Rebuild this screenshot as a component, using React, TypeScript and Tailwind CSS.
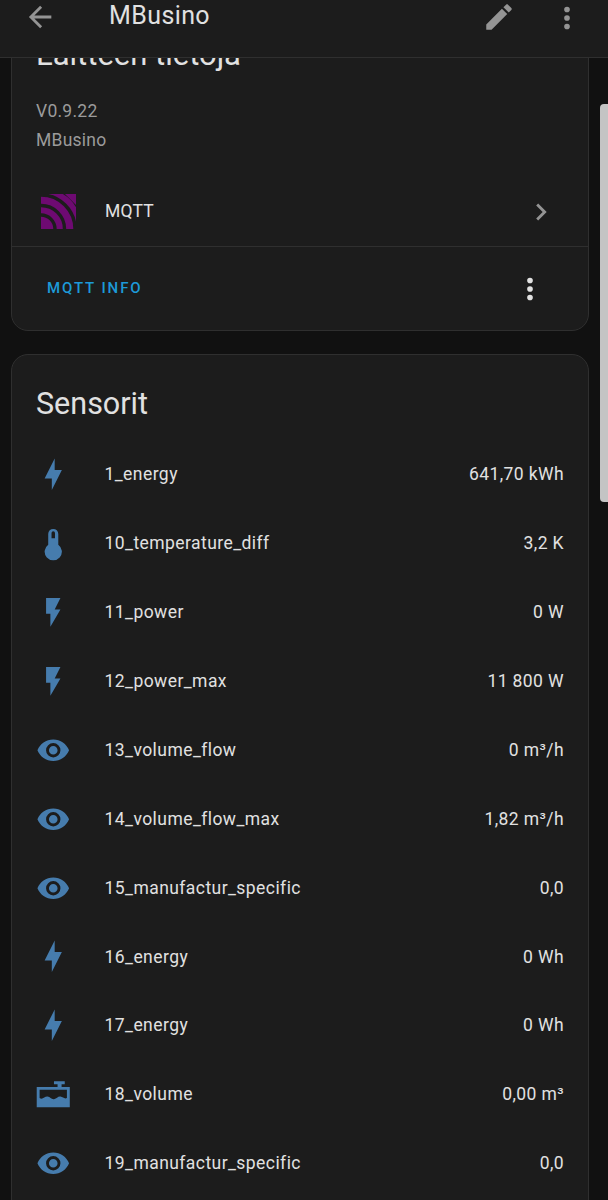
import React from "react";

const PATHS = {
  back: "M20,11V13H8L13.5,18.5L12.08,19.92L4.16,12L12.08,4.08L13.5,5.5L8,11H20Z",
  pencil: "M20.71,7.04C21.1,6.65 21.1,6 20.71,5.63L18.37,3.29C18,2.9 17.35,2.9 16.96,3.29L15.12,5.12L18.87,8.87M3,17.25V21H6.75L17.81,9.93L14.06,6.18L3,17.25Z",
  dots: "M12,16A2,2 0 0,1 14,18A2,2 0 0,1 12,20A2,2 0 0,1 10,18A2,2 0 0,1 12,16M12,10A2,2 0 0,1 14,12A2,2 0 0,1 12,14A2,2 0 0,1 10,12A2,2 0 0,1 12,10M12,4A2,2 0 0,1 14,6A2,2 0 0,1 12,8A2,2 0 0,1 10,6A2,2 0 0,1 12,4Z",
  chevron: "M8.59,16.58L13.17,12L8.59,7.41L10,6L16,12L10,18L8.59,16.58Z",
  eye: "M12,9A3,3 0 0,0 9,12A3,3 0 0,0 12,15A3,3 0 0,0 15,12A3,3 0 0,0 12,9M12,17A5,5 0 0,1 7,12A5,5 0 0,1 12,7A5,5 0 0,1 17,12A5,5 0 0,1 12,17M12,4.5C7,4.5 2.73,7.61 1,12C2.73,16.39 7,19.5 12,19.5C17,19.5 21.27,16.39 23,12C21.27,7.61 17,4.5 12,4.5Z",
  energy: "M11 15H6L13 1V9H18L11 23V15Z",
  power: "M7,2V13H10V22L17,10H13L17,2H7Z",
  temp: "M15.5 13V5.5A3.5 3.5 0 0 0 8.5 5.5V13A6 6 0 1 0 15.5 13ZM10.8 4.8A1.2 1.2 0 0 1 13.2 4.8V8.5H10.8Z",
  tank: "M12.5 3H20V5H17.8V7H23.5V21H0.5V7H15V5H12.5ZM2.5 8.8V14.6C4.5 16.2 6 13.4 8 13.6C10 13.8 10.5 15.6 12.5 15.4C14.5 15.2 15 13.4 17 13.6C18.8 13.8 19.8 15.6 21.5 14.6V8.8Z",
};

const Icon = ({ d, className }: { d: string; className: string }) => (
  <svg viewBox="0 0 24 24" fill="currentColor" fillRule="evenodd" className={className}>
    <path d={d} />
  </svg>
);

const sensors = [
  { icon: PATHS.energy, name: "1_energy", value: "641,70 kWh" },
  { icon: PATHS.temp, name: "10_temperature_diff", value: "3,2 K" },
  { icon: PATHS.power, name: "11_power", value: "0 W" },
  { icon: PATHS.power, name: "12_power_max", value: "11 800 W" },
  { icon: PATHS.eye, name: "13_volume_flow", value: "0 m³/h" },
  { icon: PATHS.eye, name: "14_volume_flow_max", value: "1,82 m³/h" },
  { icon: PATHS.eye, name: "15_manufactur_specific", value: "0,0" },
  { icon: PATHS.energy, name: "16_energy", value: "0 Wh" },
  { icon: PATHS.energy, name: "17_energy", value: "0 Wh" },
  { icon: PATHS.tank, name: "18_volume", value: "0,00 m³" },
  { icon: PATHS.eye, name: "19_manufactur_specific", value: "0,0" },
];

export default function App() {
  return (
    <div className="relative h-[1200px] w-[608px] overflow-hidden bg-[#111111] font-['Roboto',sans-serif]">
      <header className="relative z-10 flex h-[58px] items-start border-b border-[#2f2f2f] bg-[#1c1c1c]">
        <Icon d={PATHS.back} className="ml-[23px] h-[34px] w-[34px] text-[#949494]" />
        <span className="ml-[52px] text-[25px] leading-[32px] tracking-[0.4px] text-[#e1e1e1]">MBusino</span>
        <Icon d={PATHS.pencil} className="ml-auto h-[34px] w-[34px] text-[#949494]" />
        <Icon d={PATHS.dots} className="ml-[34px] mr-[24px] mt-[1px] h-[34px] w-[34px] text-[#949494]" />
      </header>

      <main className="-mt-[36px] flex flex-col gap-[23px] pl-[11px] pr-[19px]">
        <section className="rounded-b-[17px] border border-[#2f2f2f] bg-[#1c1c1c]">
          <h2 className="pl-6 pt-[12px] text-[31px] leading-[40px] text-[#e1e1e1]">Laitteen tietoja</h2>
          <div className="pl-6 pt-[22px] text-[17.5px] leading-[29px] tracking-[0.25px] text-[#9b9b9b]">
            <p>V0.9.22</p>
            <p>MBusino</p>
          </div>
          <div className="mt-[22px] flex h-[70px] items-center border-b border-[#2f2f2f] pl-[29px] pr-[30px]">
            <svg viewBox="0 0 35 35" className="h-[35px] w-[35px]">
              <defs>
                <clipPath id="mqtt-square">
                  <rect width="35" height="35" />
                </clipPath>
              </defs>
              <g clipPath="url(#mqtt-square)" fill="none">
                <rect width="35" height="35" fill="#6e0a72" />
                <g stroke="#1c1c1c" strokeWidth="3.4">
                  <path d="M0 21A14 14 0 0 1 14 35" />
                  <path d="M0 11.5A23.5 23.5 0 0 1 23.5 35" />
                  <path d="M0 1A34 34 0 0 1 34 35" />
                </g>
                <path d="M0 -1H20A36 36 0 0 1 36 15V0L35 -1Z" fill="#1c1c1c" />
                <path d="M24 0H35V11Z" fill="#6e0a72" />
              </g>
            </svg>
            <span className="ml-[29px] text-[17.5px] tracking-[0.25px] text-[#e1e1e1]">MQTT</span>
            <Icon d={PATHS.chevron} className="ml-auto h-[34px] w-[34px] text-[#949494]" />
          </div>
          <div className="flex h-[83px] items-center pl-[35px] pr-[41px]">
            <span className="text-[15px] font-medium tracking-[1.9px] text-[#1d9ad8]">MQTT INFO</span>
            <Icon d={PATHS.dots} className="ml-auto h-[34px] w-[34px] text-[#e1e1e1]" />
          </div>
        </section>

        <section className="rounded-t-[17px] border border-[#2f2f2f] bg-[#1c1c1c] pb-10">
          <h2 className="pl-6 pt-[25px] text-[30.5px] leading-[48px] text-[#e1e1e1]">Sensorit</h2>
          <div className="mt-[12px] flex flex-col">
            {sensors.map((s) => (
              <div key={s.name} className="flex h-[68.9px] items-center px-6">
                <Icon d={s.icon} className="h-[34.5px] w-[34.5px] text-[#467cad]" />
                <span className="ml-[34px] text-[17.5px] tracking-[0.44px] text-[#e1e1e1]">{s.name}</span>
                <span className="ml-auto text-[17.5px] tracking-[0.4px] text-[#e1e1e1]">{s.value}</span>
              </div>
            ))}
          </div>
        </section>
      </main>

      <div className="absolute right-0 top-[104px] h-[398px] w-[8px] rounded-l-[4px] bg-[#c4c4c4]" />
    </div>
  );
}
